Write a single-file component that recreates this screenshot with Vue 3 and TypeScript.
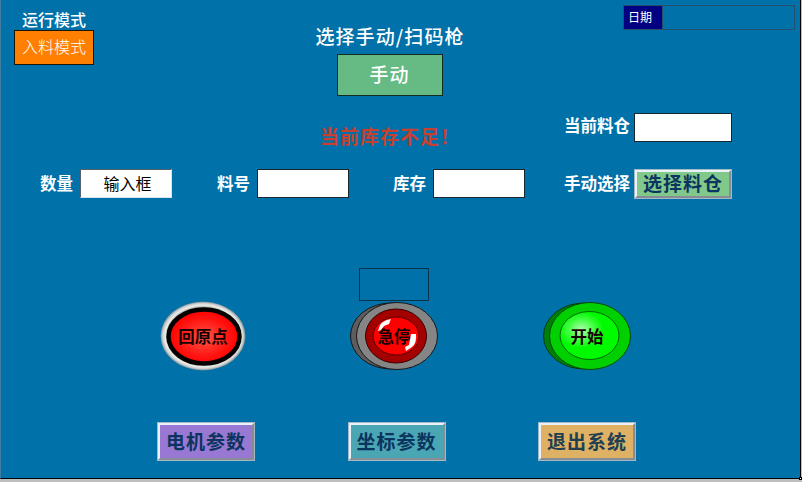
<script setup lang="ts">
interface Field {
  label: string
  value: string
  sunken: boolean
}

interface NavButton {
  label: string
  tone: string
}

const fields: Field[] = [
  { label: '数量', value: '输入框', sunken: true },
  { label: '料号', value: '', sunken: false },
  { label: '库存', value: '', sunken: false },
]

const navButtons: NavButton[] = [
  { label: '电机参数', tone: 'violet' },
  { label: '坐标参数', tone: 'teal' },
  { label: '退出系统', tone: 'sand' },
]
</script>

<template>
  <div class="frame">
    <main class="panel">
      <header class="top">
        <section class="mode">
          <div class="label mode-title">运行模式</div>
          <div class="mode-button">入料模式</div>
        </section>
        <section class="source">
          <div class="source-title">选择手动/扫码枪</div>
          <div class="source-button">手动</div>
        </section>
        <section class="date">
          <div class="date-label">日期</div>
          <div class="date-value"></div>
        </section>
      </header>

      <section class="status">
        <div class="warning">当前库存不足！</div>
        <div class="label bin-label">当前料仓</div>
        <div class="box bin-box"></div>
      </section>

      <section class="fields">
        <div v-for="field in fields" :key="field.label" class="field">
          <span class="label">{{ field.label }}</span>
          <span class="box" :class="{ sunken: field.sunken }">{{ field.value }}</span>
        </div>
        <div class="field choose">
          <span class="label">手动选择</span>
          <button class="raised green">选择料仓</button>
        </div>
      </section>

      <section class="readout"><div class="readout-box"></div></section>

      <section class="lamps">
        <button class="lamp">
          <svg viewBox="0 0 90 72" width="90" height="72">
            <defs>
              <radialGradient id="ring">
                <stop offset="0.82" stop-color="#999" />
                <stop offset="0.89" stop-color="#eeeeeb" />
                <stop offset="0.95" stop-color="#c9cfd0" />
                <stop offset="1" stop-color="#74888f" />
              </radialGradient>
              <radialGradient id="redglow" cx="0.5" cy="0.52">
                <stop offset="0" stop-color="#ff5648" />
                <stop offset="0.7" stop-color="#ff1511" />
                <stop offset="1" stop-color="#f00" />
              </radialGradient>
            </defs>
            <ellipse cx="45" cy="36" rx="42.5" ry="34.5" fill="url(#ring)" />
            <ellipse cx="46" cy="36.5" rx="35.5" ry="27" fill="url(#redglow)" stroke="#050000" stroke-width="4.5" />
          </svg>
          <span class="lamp-text">回原点</span>
        </button>
        <button class="lamp">
          <svg viewBox="0 0 90 72" width="90" height="72">
            <ellipse cx="42" cy="36" rx="40.5" ry="33" fill="#5d5d5d" stroke="#161616" />
            <ellipse cx="48" cy="36" rx="40.5" ry="33.5" fill="#858585" stroke="#171717" />
            <ellipse cx="47" cy="36" rx="30.5" ry="27" fill="#a50000" stroke="#340000" />
            <ellipse cx="47" cy="36" rx="23" ry="19" fill="#f00" stroke="#570000" />
            <path d="M29 31 Q31 20 42 19 L40 24 L35 26 L32 30Z" fill="#fff" />
            <path d="M67 34 Q68 43 63 47 L57 51 L56 47 L60 45 L62 34Z" fill="#fff" />
          </svg>
          <span class="lamp-text">急停</span>
        </button>
        <button class="lamp">
          <svg viewBox="0 0 90 72" width="90" height="72">
            <defs>
              <radialGradient id="greenglow" cx="0.36" cy="0.38" r="0.38">
                <stop offset="0" stop-color="#afffaf" />
                <stop offset="0.6" stop-color="#3dff3d" />
                <stop offset="1" stop-color="#00fa00" />
              </radialGradient>
            </defs>
            <ellipse cx="42" cy="36" rx="40.5" ry="33" fill="#007d0b" stroke="#003c0c" />
            <ellipse cx="48" cy="36" rx="40.5" ry="33.5" fill="#00d000" stroke="#004908" />
            <ellipse cx="47.5" cy="35.5" rx="29.5" ry="24" fill="url(#greenglow)" stroke="#006307" />
          </svg>
          <span class="lamp-text">开始</span>
        </button>
      </section>

      <nav class="nav">
        <button v-for="item in navButtons" :key="item.label" class="raised" :class="item.tone">
          {{ item.label }}
        </button>
      </nav>
    </main>
    <i class="handle"></i>
  </div>
</template>

<style>
body {
  margin: 0;
  background: #bdbdbd;
}
</style>

<style scoped>
.frame {
  position: relative;
  width: 802px;
  height: 482px;
  box-sizing: border-box;
  background: #bdbdbd;
  overflow: hidden;
  font-family: "Noto Sans CJK SC", sans-serif;
  color: #fff;
}

.frame * {
  box-sizing: border-box;
  white-space: nowrap;
}

.panel {
  width: 801px;
  height: 479px;
  background: #0071a9;
  border-left: 1px solid #427b9d;
  border-right: 1px solid #000;
  border-bottom: 1px solid #000;
}

.handle {
  position: absolute;
  right: 0;
  bottom: 2px;
  width: 3px;
  height: 3px;
  background: #fff;
  border: 1px solid #000;
}

button {
  margin: 0;
  padding: 0;
  font-family: inherit;
}

.label {
  font-size: 16.5px;
  line-height: 20px;
  font-weight: 700;
}

.top {
  display: flex;
  height: 96px;
}

.mode {
  width: 80px;
  margin: 9px 0 0 13px;
  text-align: center;
}

.mode-title {
  height: 21px;
  font-size: 16px;
  font-weight: 500;
}

.mode-button {
  height: 35px;
  border: 1px solid #1b1407;
  background: #ff8000;
  font-size: 16px;
  line-height: 31px;
  font-weight: 300;
}

.source {
  width: 160px;
  margin: 25px 0 0 216px;
  display: flex;
  flex-direction: column;
  align-items: center;
}

.source-title {
  height: 29px;
  font-size: 19px;
  line-height: 22px;
  letter-spacing: 1.1px;
  font-weight: 500;
}

.source-button {
  width: 106px;
  height: 42px;
  margin-left: -1px;
  border: 1px solid #152b22;
  background: #66bb85;
  font-size: 19px;
  line-height: 38px;
  letter-spacing: 1px;
  text-align: center;
  font-weight: 500;
}

.date {
  display: flex;
  width: 172px;
  height: 25px;
  margin: 5px 0 0 153px;
  border: 1px solid #23506c;
}

.date-label {
  width: 39px;
  padding-left: 4px;
  background: #000080;
  border-right: 1px solid #23506c;
  font-size: 12px;
  line-height: 22px;
}

.status {
  display: flex;
  height: 73px;
}

.warning {
  width: 145px;
  margin: 29px 0 0 319px;
  color: #c7402f;
  font-size: 19px;
  line-height: 22px;
  letter-spacing: 1px;
  font-weight: 700;
}

.bin-label {
  width: 67px;
  margin: 19px 3px 0 99px;
}

.box {
  width: 92px;
  height: 29px;
  border: 1px solid #18262e;
  background: #fff;
  color: #000;
  font-size: 16px;
  line-height: 27px;
  text-align: center;
}

.bin-box {
  width: 98px;
  margin-top: 17px;
}

.sunken {
  border-color: #55616a #d7e2e9 #d7e2e9 #55616a;
  border-width: 1px;
  padding-left: 3px;
}

.fields {
  display: flex;
  height: 99px;
  padding-left: 39px;
}

.field {
  display: flex;
  height: 30px;
  width: 132px;
  justify-content: space-between;
  margin-right: 45px;
}

.field:nth-child(2) {
  margin-right: 44px;
}

.field .label {
  margin-top: 4px;
}

.choose {
  width: 168px;
  margin: 0 0 0 -6px;
}

.raised {
  width: 98px;
  height: 39px;
  border: 3px solid;
  border-color: #eaf1f8 #878d92 #878d92 #eaf1f8;
  outline: 1px solid #a5b8c5;
  outline-offset: -1px;
  color: #0b345e;
  font-size: 19px;
  line-height: 30px;
  padding-bottom: 2px;
  letter-spacing: 1px;
  font-weight: 700;
}

.choose .raised {
  height: 30px;
  line-height: 22px;
}

.green {
  background: #80c98b;
}

.violet {
  background: #9878d2;
}

.teal {
  background: #4ba6b4;
}

.sand {
  background: #dfb165;
  color: #203f50;
}

.readout {
  height: 32px;
  padding-left: 358px;
}

.readout-box {
  width: 70px;
  height: 33px;
  border: 1px solid #09324b;
}

.lamps {
  display: flex;
  gap: 101px;
  height: 122px;
  padding-left: 157px;
}

.lamp {
  display: grid;
  width: 90px;
  height: 72px;
  border: 0;
  background: none;
  place-items: center;
}

.lamp:nth-child(3) {
  margin-left: 2px;
}

.lamp svg,
.lamp-text {
  grid-area: 1 / 1;
}

.lamp-text {
  padding-bottom: 1px;
  color: #160000;
  font-size: 16.5px;
  line-height: 20px;
  font-weight: 700;
}

.nav {
  display: flex;
  gap: 92.5px;
  padding-left: 156px;
}
</style>
